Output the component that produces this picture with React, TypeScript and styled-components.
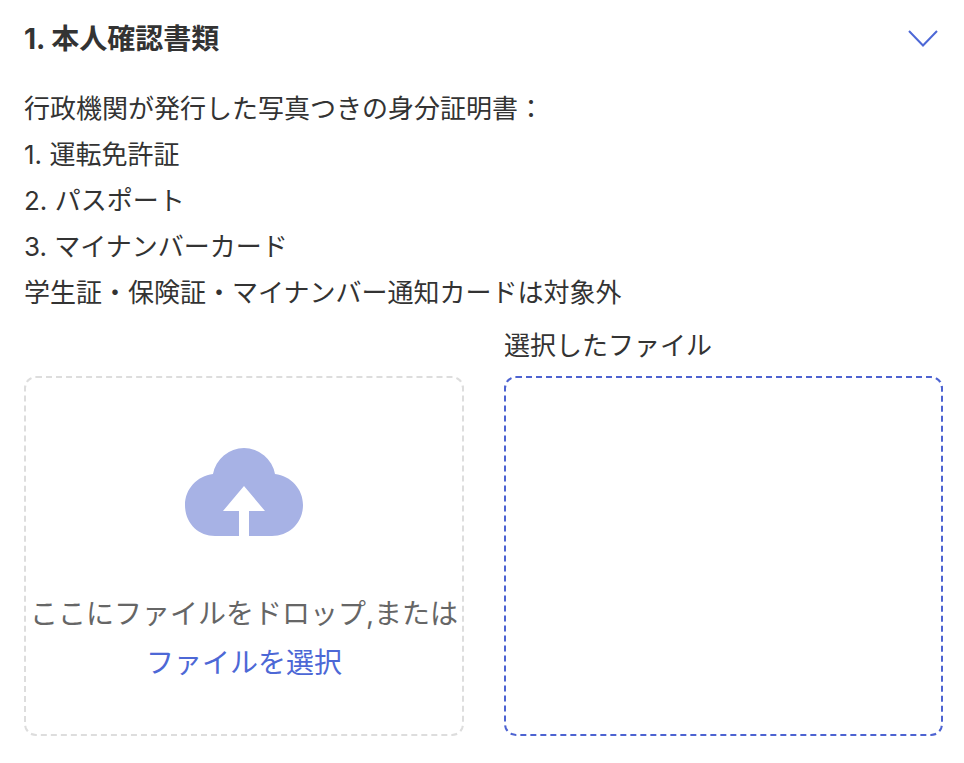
import React from 'react';
import styled, { createGlobalStyle } from 'styled-components';

const GlobalStyle = createGlobalStyle`
  html, body {
    margin: 0;
    padding: 0;
    background: #fff;
    font-family: Inter, "Noto Sans CJK JP", sans-serif;
  }
`;

const Section = styled.section`
  width: 964px;
  height: 763px;
  box-sizing: border-box;
  padding: 15px 21px 0 24px;
  color: #333;
  overflow: hidden;
`;

const Header = styled.div`
  display: flex;
  align-items: center;
  justify-content: space-between;
  height: 48px;
  margin-bottom: 23px;
`;

const Title = styled.h2`
  margin: 0;
  font-size: 28px;
  font-weight: 700;
  line-height: 48px;
`;

const Chevron = styled.svg`
  width: 30px;
  height: 18px;
  margin-right: 5px;
  fill: none;
  stroke: #4d68d6;
  stroke-width: 2;
`;

const Description = styled.div`
  font-size: 26px;
  line-height: 46px;
`;

const Columns = styled.div`
  display: grid;
  grid-template-columns: 440px 439px;
  gap: 40px;
  margin-top: 10px;
`;

const Column = styled.div`
  display: flex;
  flex-direction: column;
`;

const ColumnLabel = styled.div`
  height: 50px;
  font-size: 26px;
  line-height: 40px;
`;

const DropZone = styled.div<{ $selected?: boolean }>`
  height: 360px;
  box-sizing: border-box;
  border: 2px dashed ${(p) => (p.$selected ? '#4d63d1' : '#ddd')};
  border-radius: 12px;
  display: flex;
  flex-direction: column;
  align-items: center;
  padding-top: 70px;
`;

const CloudIcon = styled.svg`
  width: 118px;
  height: 88px;
  fill: #a7b2e5;
`;

const DropText = styled.div`
  margin-top: 53px;
  font-size: 28px;
  line-height: 50px;
  color: #666;
  white-space: nowrap;
`;

const SelectLink = styled.a`
  font-size: 28px;
  line-height: 48px;
  color: #4d68d6;
  cursor: pointer;
`;

const App: React.FC = () => {
  return (
    <>
      <GlobalStyle />
      <Section>
        <Header>
          <Title>1. 本人確認書類</Title>
          <Chevron viewBox="0 0 30 18">
            <path d="M1 1 L15 15.5 L29 1" />
          </Chevron>
        </Header>
        <Description>
          <div>行政機関が発行した写真つきの身分証明書：</div>
          <div>1. 運転免許証</div>
          <div>2. パスポート</div>
          <div>3. マイナンバーカード</div>
          <div>学生証・保険証・マイナンバー通知カードは対象外</div>
        </Description>
        <Columns>
          <Column>
            <ColumnLabel />
            <DropZone>
              <CloudIcon viewBox="0 0 118 88">
                <path
                  fillRule="evenodd"
                  d="M30 88 C13 88 0 75 0 57 C0 41 12 28 28 26 A31.5 31.5 0 0 1 90 26 C106 28 118 41 118 57 C118 75 104 88 87 88 L64 88 L64 63 L80 63 L59 38 L38 63 L54 63 L54 88 Z"
                />
              </CloudIcon>
              <DropText>ここにファイルをドロップ,または</DropText>
              <SelectLink>ファイルを選択</SelectLink>
            </DropZone>
          </Column>
          <Column>
            <ColumnLabel>選択したファイル</ColumnLabel>
            <DropZone $selected />
          </Column>
        </Columns>
      </Section>
    </>
  );
};

export default App;
